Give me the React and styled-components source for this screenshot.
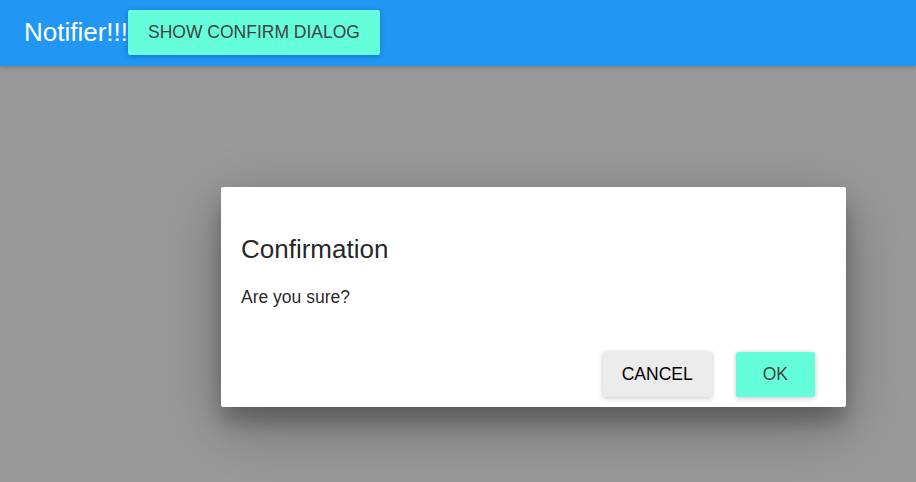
import styled, { createGlobalStyle } from "styled-components";

const GlobalStyle = createGlobalStyle`
  html, body {
    margin: 0;
    padding: 0;
    background: #999;
    font-family: "Liberation Sans", Arial, sans-serif;
  }
`;

const Page = styled.div`
  width: 916px;
  height: 482px;
  position: relative;
  overflow: hidden;
  background: #999;
`;

const AppBar = styled.header`
  position: relative;
  z-index: 2;
  display: flex;
  align-items: center;
  height: 66px;
  padding: 0 24px 1px;
  box-sizing: border-box;
  background: #2196f3;
  box-shadow: 0 1px 6px rgba(0, 0, 0, 0.12), 0 1px 4px rgba(0, 0, 0, 0.12);
`;

const Title = styled.h1`
  margin: 0;
  font-size: 26px;
  font-weight: 400;
  color: #fff;
`;

const Button = styled.button`
  height: 45px;
  padding: 0 ${p => p.$pad || 20}px;
  border: none;
  border-radius: 2px;
  background: ${p => p.$bg || "#64ffda"};
  color: ${p => p.$color || "#424242"};
  font-family: "Liberation Sans", Arial, sans-serif;
  font-size: 17.5px;
  text-transform: uppercase;
  box-shadow: 0 1px 6px rgba(0, 0, 0, 0.12), 0 1px 4px rgba(0, 0, 0, 0.12);
  cursor: pointer;
`;

const Overlay = styled.div`
  position: absolute;
  inset: 0;
  z-index: 1;
  display: flex;
  justify-content: center;
  padding-top: 187px;
  padding-left: 151px;
  box-sizing: border-box;
`;

const Dialog = styled.div`
  width: 625px;
  height: 220px;
  box-sizing: border-box;
  background: #fff;
  border-radius: 2px;
  box-shadow: 0 19px 60px rgba(0, 0, 0, 0.3), 0 15px 20px rgba(0, 0, 0, 0.22);
  display: flex;
  flex-direction: column;
`;

const DialogTitle = styled.h3`
  margin: 0;
  padding: 46px 20px 0;
  font-size: 26px;
  font-weight: 400;
  line-height: 32px;
  color: rgba(0, 0, 0, 0.87);
`;

const DialogBody = styled.div`
  padding: 20px 20px 0;
  font-size: 17.5px;
  line-height: 24px;
  color: rgba(0, 0, 0, 0.87);
  flex: 1;
`;

const Actions = styled.div`
  display: flex;
  justify-content: flex-end;
  gap: 24px;
  padding: 0 31px 10px 0;
`;

const App = () => (
  <Page>
    <GlobalStyle />
    <AppBar>
      <Title>Notifier!!!</Title>
      <Button>Show confirm dialog</Button>
    </AppBar>
    <Overlay>
      <Dialog>
        <DialogTitle>Confirmation</DialogTitle>
        <DialogBody>Are you sure?</DialogBody>
        <Actions>
          <Button $bg="#ebebeb" $color="#000" $pad={19}>Cancel</Button>
          <Button $pad={27}>OK</Button>
        </Actions>
      </Dialog>
    </Overlay>
  </Page>
);

export default App;
